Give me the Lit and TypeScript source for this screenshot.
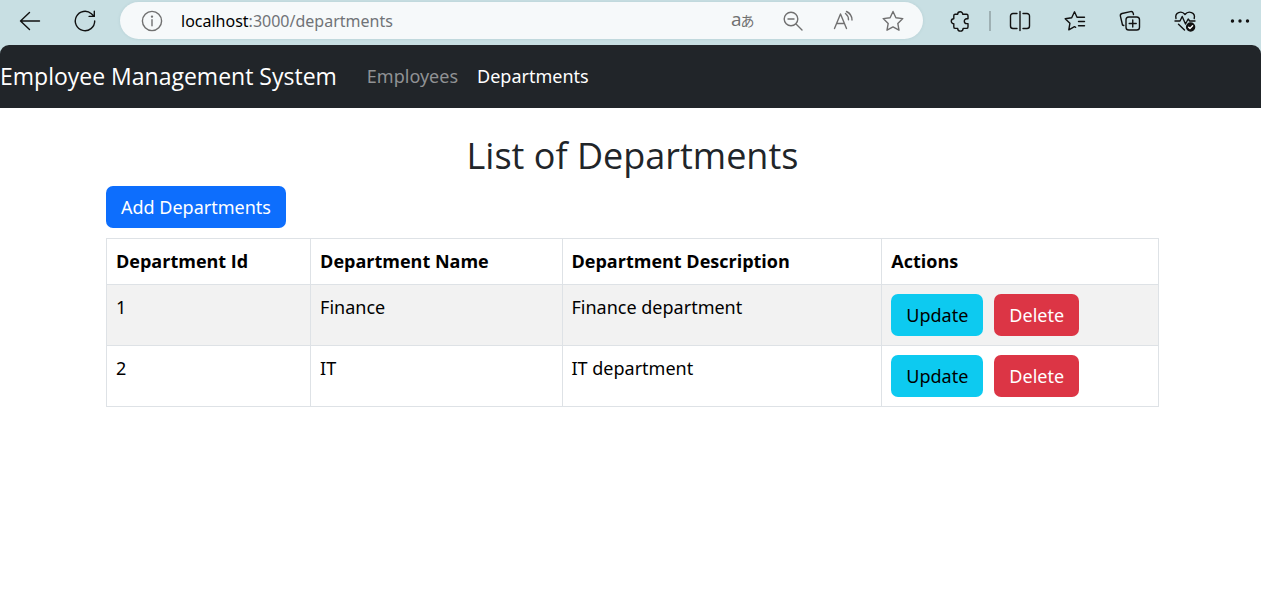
import { LitElement, html, css, svg } from "lit";
import { customElement, state } from "lit/decorators.js";

interface Department {
  id: number;
  name: string;
  description: string;
}

const icon = (label: string, body: unknown) => html`
  <button class="tool" type="button" aria-label=${label}>
    <svg class="glyph" viewBox="0 0 24 24" aria-hidden="true">${body}</svg>
  </button>
`;

@customElement("browser-bar")
export class BrowserBar extends LitElement {
  static styles = css`
    :host {
      display: flex;
      align-items: center;
      height: 45px;
      padding: 0 8px 4px 17px;
      box-sizing: border-box;
      background: #c8dfe3;
      color: #111;
      font-family: "Noto Sans", "Open Sans", sans-serif;
    }
    .tool {
      display: grid;
      place-items: center;
      width: 26px;
      height: 26px;
      padding: 0;
      border: 0;
      background: none;
      color: inherit;
      flex: none;
    }
    .glyph {
      width: 24px;
      height: 24px;
      overflow: visible;
      fill: none;
      stroke: currentColor;
      stroke-width: 1.4;
      stroke-linecap: round;
      stroke-linejoin: round;
    }
    .solid {
      fill: currentColor;
    }
    .check {
      stroke: #fff;
    }
    .letters {
      fill: currentColor;
      stroke: none;
      font-family: "Open Sans", "Noto Sans CJK JP", sans-serif;
    }
    .nav {
      display: flex;
      gap: 29px;
    }
    .address {
      display: flex;
      align-items: center;
      flex: 1;
      min-width: 0;
      height: 37px;
      margin: 0 24px 0 22px;
      padding: 0 17px 0 19px;
      box-sizing: border-box;
      border-radius: 19px;
      background: #f6f9fa;
      color: #707070;
      box-shadow: 0 0 3px rgba(80, 120, 125, 0.15);
    }
    .url {
      flex: 1;
      min-width: 0;
      margin-left: 16px;
      font-size: 16px;
      line-height: 24px;
      color: #707377;
      text-decoration: none;
      white-space: nowrap;
      overflow: hidden;
    }
    .host {
      color: #000;
    }
    .actions {
      display: flex;
      gap: 24px;
    }
    .menu {
      display: flex;
      align-items: center;
      gap: 29px;
    }
    .split {
      display: flex;
      align-items: center;
      gap: 16px;
    }
    .rule {
      width: 2px;
      height: 20px;
      background: #9eb0b3;
    }
  `;

  render() {
    return html`
      <div class="nav">
        ${icon("Back", svg`<path d="M21.5 12H2.5M11.5 3.5L2.5 12l9 8.500"/>`)}
        ${icon("Refresh", svg`<path d="M21.700 12a9.700 9.700 0 1 1-3.300-7.300L21 7.200M21.300 2.200v5.200h-5.200"/>`)}
      </div>
      <div class="address">
        ${icon("Site information", svg`<circle cx="12" cy="12" r="9.600"/><path d="M12 10.800v6"/><circle class="solid" cx="12" cy="7.600" r=".5"/>`)}
        <a class="url" href="#/departments"><span class="host">localhost</span>:3000/departments</a>
        <div class="actions">
          ${icon("Translate", svg`<text class="letters" x="0" y="17" font-size="19">a</text><text class="letters" x="9.500" y="17" font-size="14">あ</text>`)}
          ${icon("Zoom out", svg`<circle cx="10" cy="10" r="6.800"/><path d="M15 15l6 6M7 10h6"/>`)}
          ${icon("Read aloud", svg`<path d="M3.500 19.500L9.500 5l6 14.500M5.700 14.500h7.600M14.500 4.500a8 8 0 0 1 3 6.300M15.500 2.500a9.500 9.500 0 0 1 5.500 8.600"/>`)}
          ${icon("Add to favourites", svg`<path d="M12 2.500l2.900 6.200 6.900.9-5 4.800 1.200 6.800-6-3.300-6 3.300 1.200-6.800-5-4.800 6.900-.9z"/>`)}
        </div>
      </div>
      <div class="menu">
        <div class="split">
          ${icon("Extensions", svg`<path d="M7 5.200h2.700a2.500 2.500 0 0 1 5 0h3.800a1.500 1.500 0 0 1 1.500 1.500v3.100h-1.300a2.300 2.300 0 0 0 0 4.800H20v3.300a1.500 1.500 0 0 1-1.500 1.500h-3.400a2.700 2.700 0 0 1-5.400 0H7.300a1.500 1.500 0 0 1-1.500-1.500v-3.200a2.500 2.500 0 0 1 0-5V6.700A1.400 1.400 0 0 1 7 5.200z"/>`)}
          <span class="rule"></span>
          ${icon("Split screen", svg`<path d="M12 2.500v19M9 4.500H5A2.500 2.500 0 0 0 2.500 7v10A2.500 2.500 0 0 0 5 19.500h4M15 4.500h4A2.500 2.500 0 0 1 21.500 7v10a2.500 2.500 0 0 1-2.500 2.500h-4"/>`)}
        </div>
        ${icon("Favourites", svg`<path d="M14 8.300h7.500M15.500 12.500h6M15.500 16.700h6M14 8.300L11.500 2.800l-2.800 5.900-6.500 1 4.700 4.600-1.100 6.600 5.700-3.200 1.200.6"/>`)}
        ${icon("Collections", svg`<rect x="8" y="8" width="13.500" height="13" rx="2.800"/><path d="M14.750 11v7M11.200 14.500h7M5.800 16.500L4.500 16 2.400 7.200A2.300 2.300 0 0 1 4 4.500L12.500 2.600a2.300 2.300 0 0 1 2.700 1.600l.3 1.300"/>`)}
        ${icon("Browser essentials", svg`<path d="M3 9.500C1.500 3.500 8.500 1 12 5.500 15.500 1 22.800 3.500 21.200 9.500M2 12h5l2.200-4.500L12.500 15l2.700-5 1.500 2H22M5.500 15.200l6 5.800"/><circle class="solid" cx="17.600" cy="18" r="4"/><path class="check" d="M15.700 18.200l1.300 1.300 2.600-2.800"/>`)}
        ${icon("Settings and more", svg`<circle class="solid" cx="4.500" cy="12" r="1"/><circle class="solid" cx="12" cy="12" r="1"/><circle class="solid" cx="19.500" cy="12" r="1"/>`)}
      </div>
    `;
  }
}

@customElement("app-root")
export class AppRoot extends LitElement {
  static styles = css`
    :host {
      display: block;
      min-height: 100vh;
      background: #fff;
      color: #212529;
      font-family: "Noto Sans", "Open Sans", sans-serif;
      font-size: 18px;
      line-height: 27px;
    }
    .frame {
      background: #c8dfe3;
    }
    .navbar {
      display: flex;
      align-items: center;
      height: 63px;
      padding-bottom: 2px;
      box-sizing: border-box;
      border-radius: 9px 9px 0 0;
      background: #212529;
    }
    .brand {
      margin-right: 30px;
      font-family: "Open Sans", "Noto Sans", sans-serif;
      font-size: 23px;
      line-height: 36px;
      color: #fff;
      text-decoration: none;
    }
    .links {
      display: flex;
      gap: 19px;
      padding-top: 2px;
    }
    .link {
      color: #909294;
      text-decoration: none;
    }
    .current {
      color: #fff;
    }
    .content {
      padding: 24px 102px 24px 106px;
    }
    .title {
      margin: 0 0 6px;
      font-family: "Open Sans", "Noto Sans", sans-serif;
      font-size: 36px;
      font-weight: 400;
      line-height: 48px;
      text-align: center;
    }
    .btn {
      height: 42px;
      padding: 0 15px;
      border: 0;
      border-radius: 7px;
      font: inherit;
      color: #fff;
    }
    .primary {
      display: block;
      margin-bottom: 10px;
      background: #0d6efd;
    }
    .info {
      background: #0dcaf0;
      color: #000;
    }
    .danger {
      background: #dc3545;
    }
    .table {
      width: 100%;
      table-layout: fixed;
      border-collapse: collapse;
      color: #000;
    }
    .cell {
      box-sizing: border-box;
      padding: 9px;
      border: 1px solid #dee2e6;
      text-align: left;
      vertical-align: top;
    }
    .head {
      font-family: "Open Sans", "Noto Sans", sans-serif;
    }
    .id {
      width: 19.4%;
    }
    .name {
      width: 23.9%;
    }
    .description {
      width: 30.4%;
    }
    .row:nth-child(odd) {
      background: #f2f2f2;
    }
    .buttons {
      display: flex;
      gap: 11px;
    }
  `;

  @state() private departments: Department[] = [
    { id: 1, name: "Finance", description: "Finance department" },
    { id: 2, name: "IT", description: "IT department" },
  ];

  render() {
    return html`
      <browser-bar></browser-bar>
      <header class="frame">
        <nav class="navbar">
          <a class="brand" href="#/">Employee Management System</a>
          <div class="links">
            <a class="link" href="#/employees">Employees</a>
            <a class="link current" href="#/departments" aria-current="page">Departments</a>
          </div>
        </nav>
      </header>
      <main class="content">
        <h2 class="title">List of Departments</h2>
        <button class="btn primary" type="button">Add Departments</button>
        <table class="table">
          <thead>
            <tr>
              <th class="cell head id" scope="col">Department Id</th>
              <th class="cell head name" scope="col">Department Name</th>
              <th class="cell head description" scope="col">Department Description</th>
              <th class="cell head" scope="col">Actions</th>
            </tr>
          </thead>
          <tbody>
            ${this.departments.map(
              (d) => html`
                <tr class="row">
                  <td class="cell">${d.id}</td>
                  <td class="cell">${d.name}</td>
                  <td class="cell">${d.description}</td>
                  <td class="cell">
                    <div class="buttons">
                      <button class="btn info" type="button">Update</button>
                      <button class="btn danger" type="button">Delete</button>
                    </div>
                  </td>
                </tr>
              `,
            )}
          </tbody>
        </table>
      </main>
    `;
  }
}
